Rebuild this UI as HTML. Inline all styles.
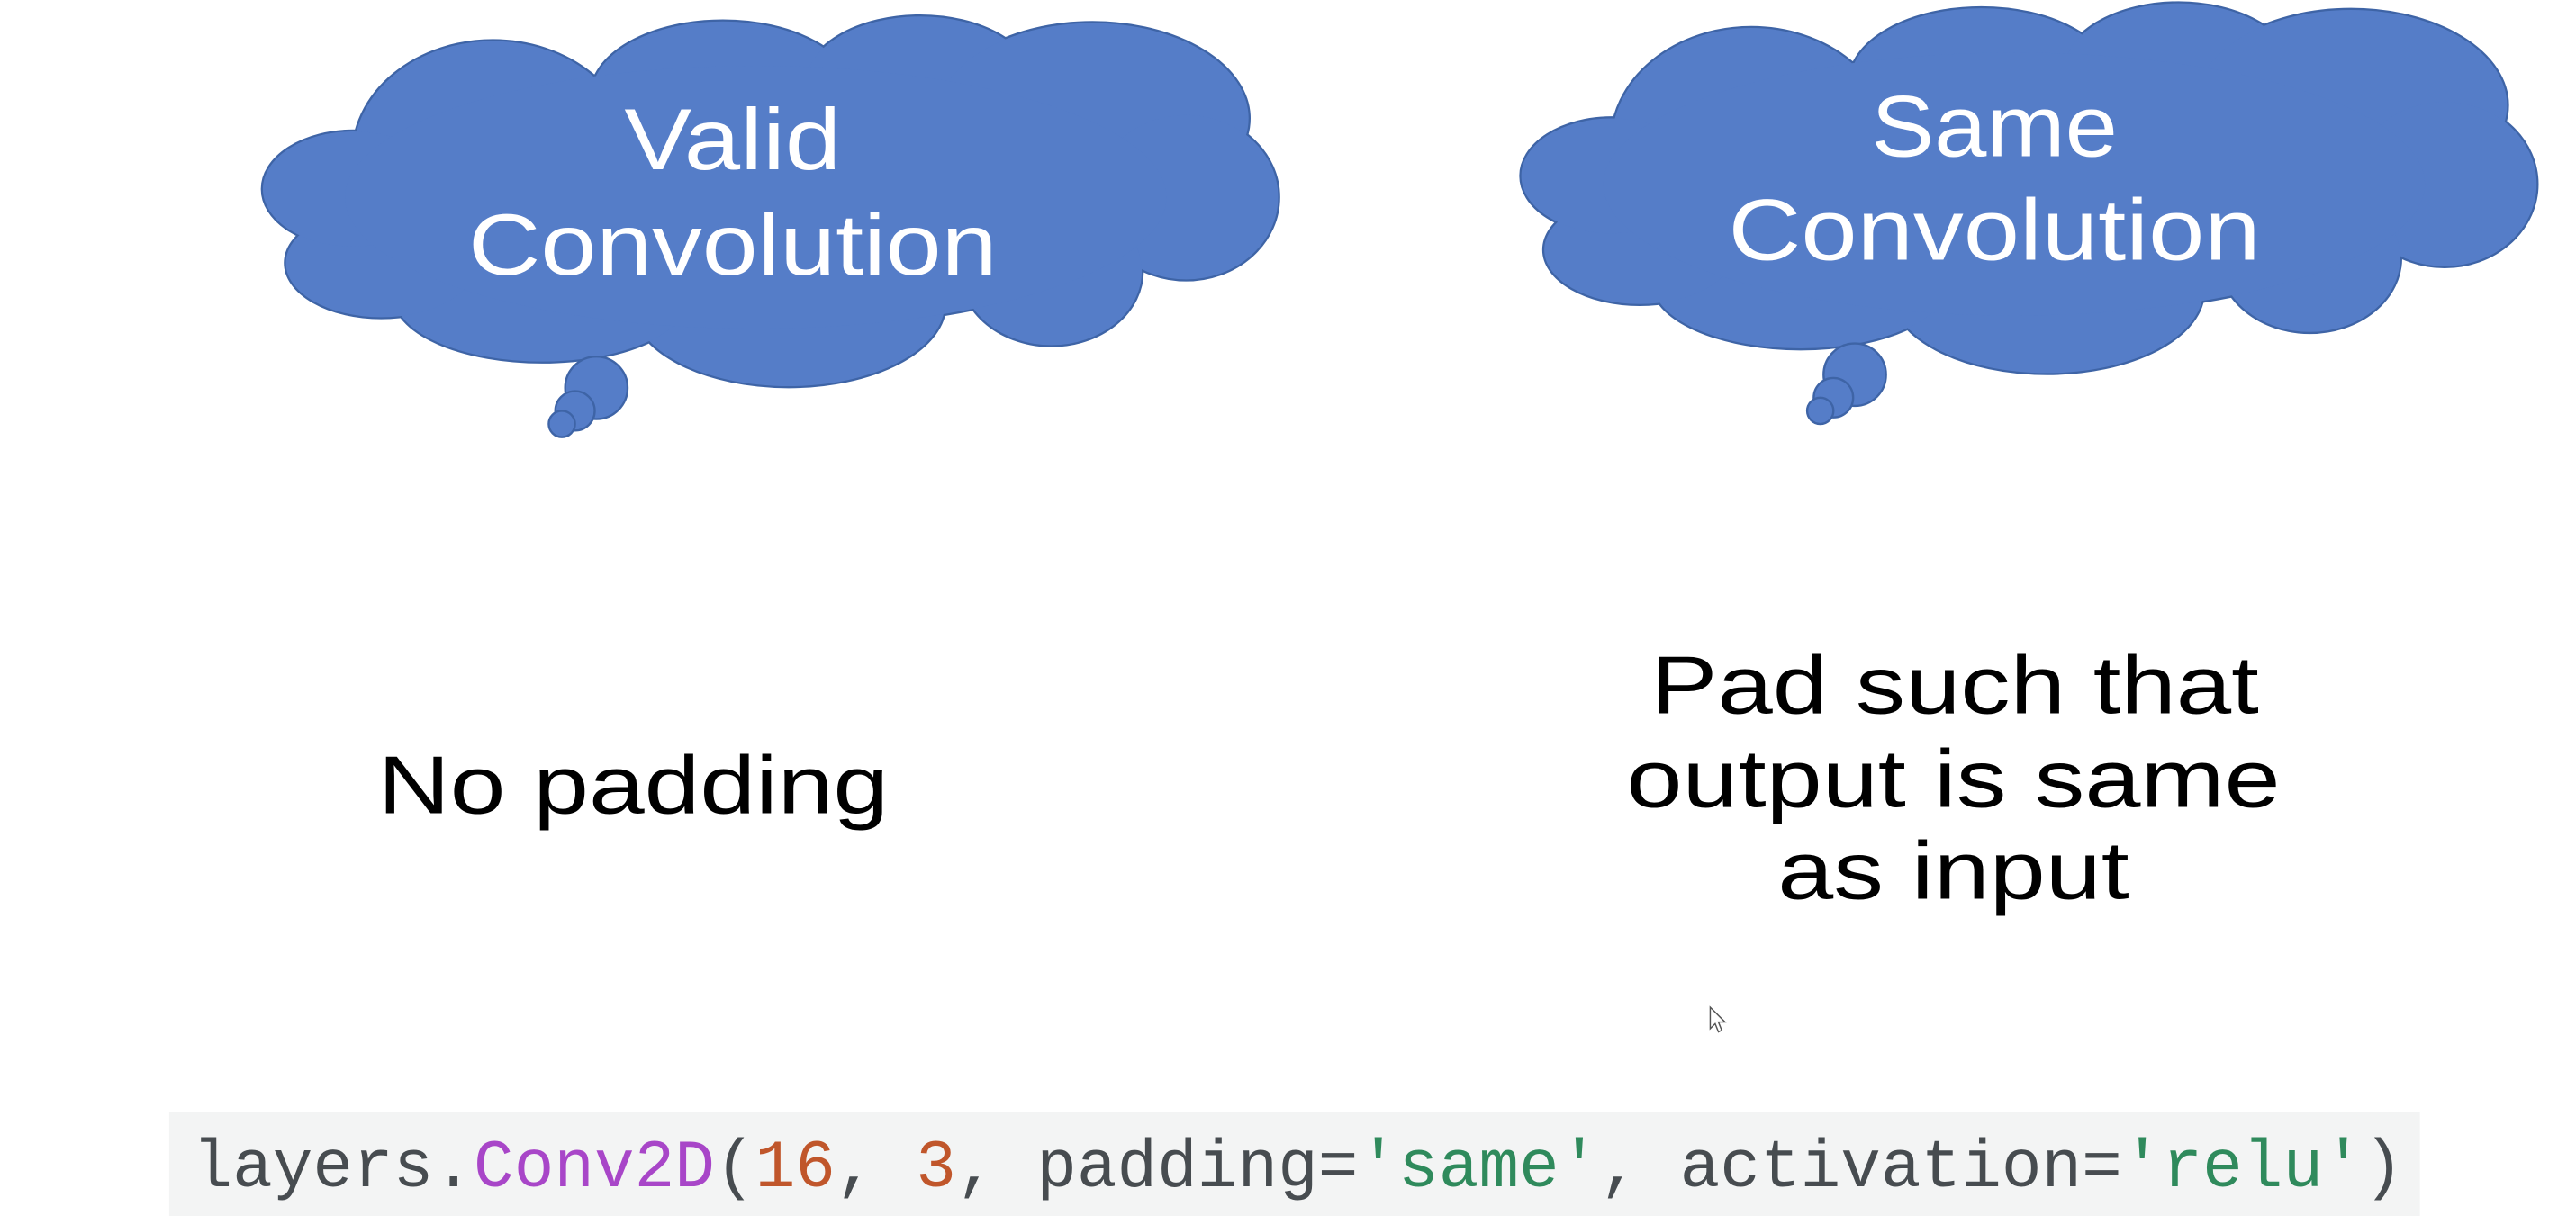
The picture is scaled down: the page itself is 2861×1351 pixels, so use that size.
<!DOCTYPE html>
<html><head><meta charset="utf-8"><style>
html,body{margin:0;padding:0;background:#fff;width:2861px;height:1351px;overflow:hidden}
svg{display:block}
</style></head><body>
<svg width="2861" height="1351" viewBox="0 0 1568 740" preserveAspectRatio="none" xmlns="http://www.w3.org/2000/svg">
<defs>
<g id="cloud">
  <ellipse cx="300" cy="95" rx="85" ry="70"/>
  <ellipse cx="440" cy="58" rx="80" ry="45"/>
  <ellipse cx="560" cy="52" rx="70" ry="42"/>
  <ellipse cx="665" cy="72" rx="95" ry="58"/>
  <ellipse cx="722" cy="120" rx="56" ry="50"/>
  <ellipse cx="640" cy="165" rx="55" ry="45"/>
  <ellipse cx="480" cy="185" rx="95" ry="50"/>
  <ellipse cx="330" cy="180" rx="90" ry="40"/>
  <ellipse cx="232" cy="160" rx="58" ry="33"/>
  <ellipse cx="215" cy="115" rx="55" ry="35"/>
  <ellipse cx="460" cy="120" rx="250" ry="80"/>
</g>
<g id="tail">
  <circle cx="363" cy="236" r="19"/>
  <circle cx="350" cy="250" r="12"/>
  <circle cx="342" cy="258" r="8"/>
</g>
<g id="full">
  <use href="#cloud" fill="#557dc8" stroke="#3e64a6" stroke-width="2.5"/>
  <use href="#cloud" fill="#557dc8"/>
  <use href="#tail" fill="#557dc8" stroke="#3e64a6" stroke-width="1.3"/>
</g>
</defs>
<use href="#full"/>
<use href="#full" transform="translate(766,-8)"/>
<g font-family="Liberation Sans, sans-serif" fill="#fff" text-anchor="middle" font-size="53">
  <text x="446" y="103" textLength="132" lengthAdjust="spacingAndGlyphs">Valid</text>
  <text x="446" y="167" textLength="322" lengthAdjust="spacingAndGlyphs">Convolution</text>
  <text x="1214" y="95" textLength="150" lengthAdjust="spacingAndGlyphs">Same</text>
  <text x="1214" y="158" textLength="324" lengthAdjust="spacingAndGlyphs">Convolution</text>
</g>
<g font-family="Liberation Sans, sans-serif" fill="#000" font-size="50">
  <text x="230" y="495" textLength="311" lengthAdjust="spacingAndGlyphs">No padding</text>
  <text x="1005" y="434" textLength="370" lengthAdjust="spacingAndGlyphs">Pad such that</text>
  <text x="990" y="491" textLength="398" lengthAdjust="spacingAndGlyphs">output is same</text>
  <text x="1082" y="547" textLength="214" lengthAdjust="spacingAndGlyphs">as input</text>
</g>
<path d="M1041,613 L1041,626 L1044,623 L1046,628 L1048,627 L1046,622 L1050,622 Z" fill="#fff" stroke="#555" stroke-width="0.8"/>
<rect x="103" y="677" width="1370" height="63" fill="#f3f4f4"/>
<text x="117" y="722" font-family="Liberation Mono, monospace" font-size="41" textLength="1346" lengthAdjust="spacingAndGlyphs" fill="#474c50">layers.<tspan fill="#a846c8">Conv2D</tspan>(<tspan fill="#c0562b">16</tspan>, <tspan fill="#c0562b">3</tspan>, padding=<tspan fill="#2f8a5c">'same'</tspan>, activation=<tspan fill="#2f8a5c">'relu'</tspan>)</text>
</svg>
</body></html>
